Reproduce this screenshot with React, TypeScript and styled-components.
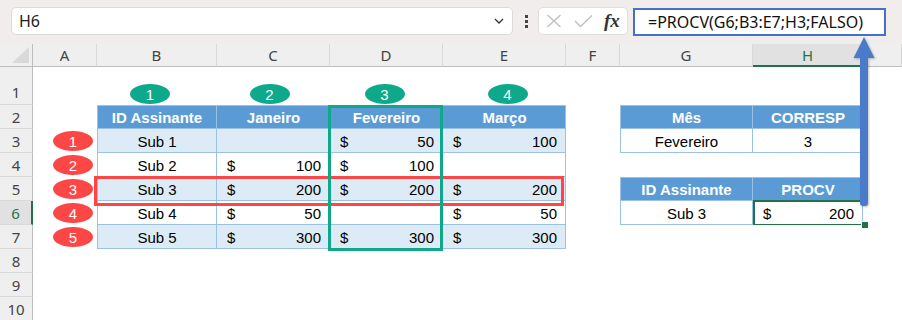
import React from 'react';
import styled, { createGlobalStyle } from 'styled-components';

type Kind = 'none' | 'hdr' | 'light' | 'plain';

const GlobalStyle = createGlobalStyle`
  html, body {
    margin: 0;
    padding: 0;
    background: #ffffff;
  }
  body {
    font-family: 'Liberation Sans', Arial, sans-serif;
    overflow: hidden;
  }
`;

// the last column (I) is cut by the window edge, so its letter is not visible
const COLS = ['A', 'B', 'C', 'D', 'E', 'F', 'G', 'H', ''];
const ROWS = [1, 2, 3, 4, 5, 6, 7, 8, 9, 10];

const MAIN = [
    ['ID Assinante', 'Janeiro', 'Fevereiro', 'Março'],
    ['Sub 1', '', '50', '100'],
    ['Sub 2', '100', '100', ''],
    ['Sub 3', '200', '200', '200'],
    ['Sub 4', '50', '', '50'],
    ['Sub 5', '300', '300', '300'],
];

const SIDE: Record<number, { g: string; h: string; hdr: boolean; top: boolean; money?: boolean }> = {
    2: { g: 'Mês', h: 'CORRESP', hdr: true, top: true },
    3: { g: 'Fevereiro', h: '3', hdr: false, top: false },
    5: { g: 'ID Assinante', h: 'PROCV', hdr: true, top: true },
    6: { g: 'Sub 3', h: '200', hdr: false, top: false, money: true },
};

// nudges of the green column markers from the centre of their column
const BADGE_SHIFT = [0, -7, -4, -2, 3];

const App = () => {

    const renderCell = (r: number, c: number) => {
        const key = `${r}-${c}`;

        if (r === 1 && c >= 1 && c <= 4) {
            return (
                <Cell key={key} $valign="flex-end">
                    <Badge $tone="#0ea98a" $shift={BADGE_SHIFT[c]}>{c}</Badge>
                </Cell>
            );
        }

        if (c === 0 && r >= 3 && r <= 7) {
            return (
                <Cell key={key} $justify="flex-end" $pad="0 4px 0 0">
                    <Badge $tone="#fd4646">{r - 2}</Badge>
                </Cell>
            );
        }

        if (r >= 2 && r <= 7 && c >= 1 && c <= 4) {
            const value = MAIN[r - 2][c - 1];
            const kind: Kind = r === 2 ? 'hdr' : r % 2 === 1 ? 'light' : 'plain';
            if (r > 2 && c > 1 && value) {
                return (
                    <Cell key={key} $kind={kind} $top={r === 2} $left={c === 1} $justify="space-between" $pad="0 9px 0 10px">
                        <span>$</span>
                        <span>{value}</span>
                    </Cell>
                );
            }
            return (
                <Cell key={key} $kind={kind} $top={r === 2} $left={c === 1}>
                    {value}
                </Cell>
            );
        }

        if (SIDE[r] && (c === 6 || c === 7)) {
            const s = SIDE[r];
            const kind: Kind = s.hdr ? 'hdr' : 'plain';
            if (c === 7 && s.money) {
                return (
                    <Cell key={key} $kind={kind} $selected $justify="space-between" $pad="0 9px 0 10px">
                        <span>$</span>
                        <span>{s.h}</span>
                    </Cell>
                );
            }
            return (
                <Cell key={key} $kind={kind} $top={s.top} $left={c === 6}>
                    {c === 6 ? s.g : s.h}
                </Cell>
            );
        }

        return <Cell key={key} />;
    };

    return (
        <Page>
            <GlobalStyle />
            <Toolbar>
                <NameBox>
                    H6
                    <svg width="10" height="6" viewBox="0 0 10 6">
                        <polyline points="1,1 5,5 9,1" fill="none" stroke="#333" strokeWidth="1.3" />
                    </svg>
                </NameBox>
                <Dots>
                    <i /><i /><i />
                </Dots>
                <ButtonBox>
                    <svg width="16" height="14" viewBox="0 0 16 14">
                        <path d="M1.5 1 L14.5 13 M14.5 1 L1.5 13" stroke="#c2c0c0" strokeWidth="1.4" />
                    </svg>
                    <svg width="19" height="14" viewBox="0 0 19 14">
                        <polyline points="1,7 6.5,12.5 18,1.5" fill="none" stroke="#c2c0c0" strokeWidth="1.4" />
                    </svg>
                    <Fx>fx</Fx>
                </ButtonBox>
                <FormulaBox>=PROCV(G6;B3:E7;H3;FALSO)</FormulaBox>
            </Toolbar>

            <Sheet>
                <Corner>
                    <svg width="17" height="16" viewBox="0 0 17 16">
                        <polygon points="17,0 17,16 0,16" fill="#d9d9d9" />
                    </svg>
                </Corner>
                {COLS.map((col, i) => (
                    <ColHead key={i} $active={col === 'H'}>{col}</ColHead>
                ))}
                {ROWS.map(r => (
                    <React.Fragment key={r}>
                        <RowHead $active={r === 6} $bottom={r === 1}>{r}</RowHead>
                        {COLS.map((_, c) => renderCell(r, c))}
                    </React.Fragment>
                ))}
            </Sheet>

            <Marker $color="#fd4646" style={{ left: 94, top: 176, width: 470, height: 30 }} />
            <Marker $color="#0ea98a" style={{ left: 328, top: 105, width: 115, height: 146 }} />

            <Arrow width="30" height="176" viewBox="0 0 30 176">
                <polygon points="14,1 3.5,22 24.5,22" fill="#4a7bcb" />
                <rect x="10" y="20" width="8" height="150" rx="3" fill="#4a7bcb" />
            </Arrow>
        </Page>
    );
}

const Page = styled.div`
    position: relative;
    width: 902px;
    height: 320px;
    overflow: hidden;
    background: #ffffff;
`

const Toolbar = styled.div`
    display: flex;
    align-items: flex-start;
    height: 44px;
    box-sizing: border-box;
    padding-top: 7px;
    background: #f1eded;
    font-family: 'Segoe UI', 'Noto Sans', sans-serif;
`

const NameBox = styled.div`
    margin-left: 11px;
    width: 502px;
    height: 28px;
    box-sizing: border-box;
    display: flex;
    align-items: center;
    justify-content: space-between;
    padding: 0 8px 0 7px;
    background: #ffffff;
    border: 1px solid #dedada;
    border-radius: 5px;
    font-size: 16px;
    color: #222;
`

const Dots = styled.div`
    margin: 8px 0 0 12px;
    display: flex;
    flex-direction: column;
    gap: 2px;

    i {
        display: block;
        width: 3px;
        height: 3px;
        background: #444;
    }
`

const ButtonBox = styled.div`
    margin-left: 10px;
    width: 90px;
    height: 28px;
    box-sizing: border-box;
    display: flex;
    align-items: center;
    gap: 12px;
    padding-left: 7px;
    background: #ffffff;
    border: 1px solid #e2dede;
    border-radius: 5px;
`

const Fx = styled.span`
    font-family: 'Liberation Serif', serif;
    font-style: italic;
    font-weight: 700;
    font-size: 19px;
    color: #333;
    margin-left: -1px;
`

const FormulaBox = styled.div`
    margin: 1px 0 0 5px;
    width: 253px;
    height: 28px;
    box-sizing: border-box;
    display: flex;
    align-items: center;
    padding-left: 13px;
    background: #ffffff;
    border: 2px solid #4472c4;
    font-size: 16px;
    color: #111;
    white-space: nowrap;
`

const Sheet = styled.div`
    display: grid;
    grid-template-columns: 33px 64px 120px 113px 113px 123px 54px 133px 110px 1fr;
    grid-template-rows: 23px 38px repeat(9, 24px);
    font-size: 15px;
`

const Corner = styled.div`
    display: flex;
    align-items: flex-end;
    justify-content: flex-end;
    padding: 0 3px 3px 0;
    background: #efefef;
    border-right: 1px solid #bdbdbd;
    border-bottom: 1px solid #bdbdbd;
`

const ColHead = styled.div<{ $active?: boolean }>`
    display: flex;
    align-items: center;
    justify-content: center;
    font-family: 'Segoe UI', 'Noto Sans', sans-serif;
    font-size: 15px;
    color: ${p => p.$active ? '#217346' : '#444'};
    background: ${p => p.$active ? '#e1e1e1' : '#efefef'};
    border-right: 1px solid #d9d9d9;
    border-bottom: ${p => p.$active ? '2px solid #217346' : '1px solid #bdbdbd'};
`

const RowHead = styled.div<{ $active?: boolean; $bottom?: boolean }>`
    display: flex;
    align-items: ${p => p.$bottom ? 'flex-end' : 'center'};
    justify-content: center;
    line-height: 24px;
    font-family: 'Segoe UI', 'Noto Sans', sans-serif;
    font-size: 15px;
    color: ${p => p.$active ? '#217346' : '#444'};
    background: ${p => p.$active ? '#e1e1e1' : '#efefef'};
    border-right: ${p => p.$active ? '2px solid #217346' : '1px solid #bdbdbd'};
    border-bottom: 1px solid #d9d9d9;
`

const borderFor = (p: { $kind?: Kind; $top?: boolean; $left?: boolean }) => {
    if (!p.$kind || p.$kind === 'none') return 'none';
    const s = ['inset -1px -1px 0 #9bc2e6'];
    if (p.$top) s.push('inset 0 1px 0 #9bc2e6');
    if (p.$left) s.push('inset 1px 0 0 #9bc2e6');
    return s.join(', ');
}

const Cell = styled.div<{
    $kind?: Kind;
    $top?: boolean;
    $left?: boolean;
    $justify?: string;
    $valign?: string;
    $pad?: string;
    $selected?: boolean;
}>`
    position: relative;
    min-width: 0;
    display: flex;
    align-items: ${p => p.$valign ?? 'center'};
    justify-content: ${p => p.$justify ?? 'center'};
    padding: ${p => p.$pad ?? '0'};
    box-sizing: border-box;
    white-space: nowrap;
    color: ${p => p.$kind === 'hdr' ? '#ffffff' : '#000000'};
    font-weight: ${p => p.$kind === 'hdr' ? 700 : 400};
    background: ${p => p.$kind === 'hdr' ? '#5b9bd5' : p.$kind === 'light' ? '#ddebf7' : '#ffffff'};
    box-shadow: ${borderFor};

    ${p => p.$selected && `
        &::after {
            content: '';
            position: absolute;
            inset: -1px -3px -1px 0;
            border: 2px solid #217346;
        }
        &::before {
            content: '';
            position: absolute;
            right: -6px;
            bottom: -4px;
            width: 6px;
            height: 6px;
            background: #217346;
            border: 1px solid #ffffff;
            z-index: 1;
        }
    `}
`

const Badge = styled.div<{ $tone: string; $shift?: number }>`
    width: 40px;
    height: 20px;
    margin-bottom: ${p => p.$shift !== undefined ? '1px' : '0'};
    transform: translateX(${p => p.$shift ?? 0}px);
    display: flex;
    align-items: center;
    justify-content: center;
    border-radius: 50%;
    background: ${p => p.$tone};
    color: #ffffff;
    font-size: 15px;
`

const Marker = styled.div<{ $color: string }>`
    position: absolute;
    box-sizing: border-box;
    border: 3px solid ${p => p.$color};
    pointer-events: none;
`

const Arrow = styled.svg`
    position: absolute;
    left: 850px;
    top: 36px;
    filter: drop-shadow(1px 1px 1px rgba(0, 0, 0, 0.25));
`

export default App;
